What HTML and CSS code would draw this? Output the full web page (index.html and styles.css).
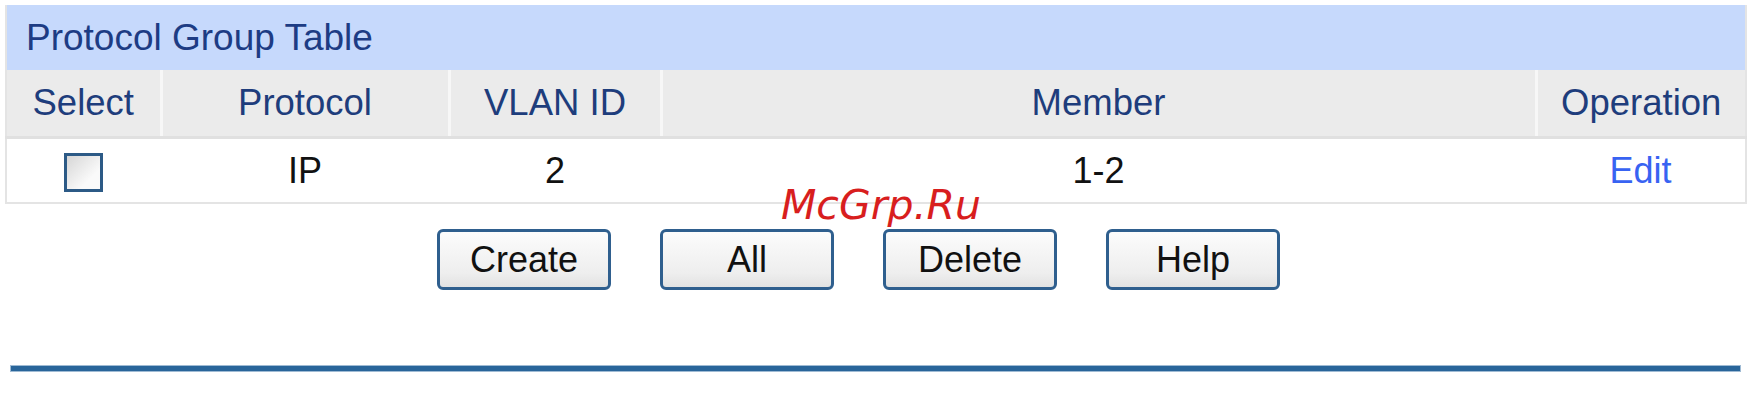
FILE: index.html
```html
<!DOCTYPE html>
<html>
<head>
<meta charset="utf-8">
<link rel="stylesheet" href="styles.css">
</head>
<body>
<div class="page">
  <table class="grid">
    <colgroup>
      <col class="c1"><col class="c2"><col class="c3"><col class="c4"><col class="c5">
    </colgroup>
    <tr class="title-row"><td colspan="5">Protocol Group Table</td></tr>
    <tr class="head-row">
      <th>Select</th><th>Protocol</th><th>VLAN ID</th><th>Member</th><th>Operation</th>
    </tr>
    <tr class="data-row">
      <td><span class="chk"></span></td><td>IP</td><td>2</td><td>1-2</td><td><a class="edit">Edit</a></td>
    </tr>
  </table>
  <div class="buttons">
    <button class="btn">Create</button>
    <button class="btn">All</button>
    <button class="btn">Delete</button>
    <button class="btn">Help</button>
  </div>
  <div class="rule"></div>
  <div class="watermark">McGrp.Ru</div>
</div>
</body>
</html>
```
FILE: styles.css
```css
html, body { margin: 0; padding: 0; background: #fff; }
body { font-family: "Liberation Sans", Arial, sans-serif; }
.page { position: relative; padding: 5px 0 0 5px; width: 1745px; height: 398px; }
.grid {
  width: 1740px;
  table-layout: fixed;
  border-collapse: collapse;
  font-size: 36px;
  border: 2px solid #e4e4e4;
  border-top: none;
}
.c1 { width: 155px; } .c2 { width: 288px; } .c3 { width: 212px; } .c4 { width: 875px; } .c5 { width: 210px; }
.title-row td {
  background: #c6d9fc;
  color: #1d3c84;
  font-size: 37px;
  height: 65px;
  padding: 0 0 0 19px;
  box-sizing: border-box;
}
.head-row th {
  background: #ebebeb;
  color: #1e3d7c;
  font-weight: normal;
  font-size: 36.5px;
  height: 66px;
  padding: 0;
  border-left: 3px solid #f7f7f7;
  border-bottom: 3px solid #e0e0e0;
}
.head-row th:first-child { border-left: none; }
.data-row td {
  height: 63px;
  text-align: center;
  color: #111;
  padding: 0;
}
.chk {
  display: inline-block;
  width: 33px; height: 33px;
  border: 3px solid #2c5a86;
  background: linear-gradient(135deg, #d6d6d6, #fafafa 70%);
  vertical-align: middle;
  margin-left: -2px;
}
.edit { color: #3863f2; text-decoration: none; }
.buttons {
  display: flex;
  gap: 49px;
  padding-left: 432px;
  margin-top: 25px;
}
.btn {
  width: 174px; height: 61px;
  box-sizing: border-box;
  border: 3px solid #2f5f8e;
  border-radius: 6px;
  background: linear-gradient(#fcfcfc, #eeeeee 75%, #e2e2e2);
  font-family: "Liberation Sans", Arial, sans-serif;
  font-size: 36px;
  color: #111;
  padding: 0;
}
.rule {
  margin: 76px 0 0 6px;
  width: 1729px;
  height: 5px;
  background: #29659a;
  box-shadow: 0 0 0 1px #9fbbd4;
}
.watermark {
  position: absolute;
  left: 781px; top: 181px;
  font-family: "DejaVu Sans", sans-serif;
  font-style: italic;
  font-size: 41px;
  color: #d81e1e;
}
```
